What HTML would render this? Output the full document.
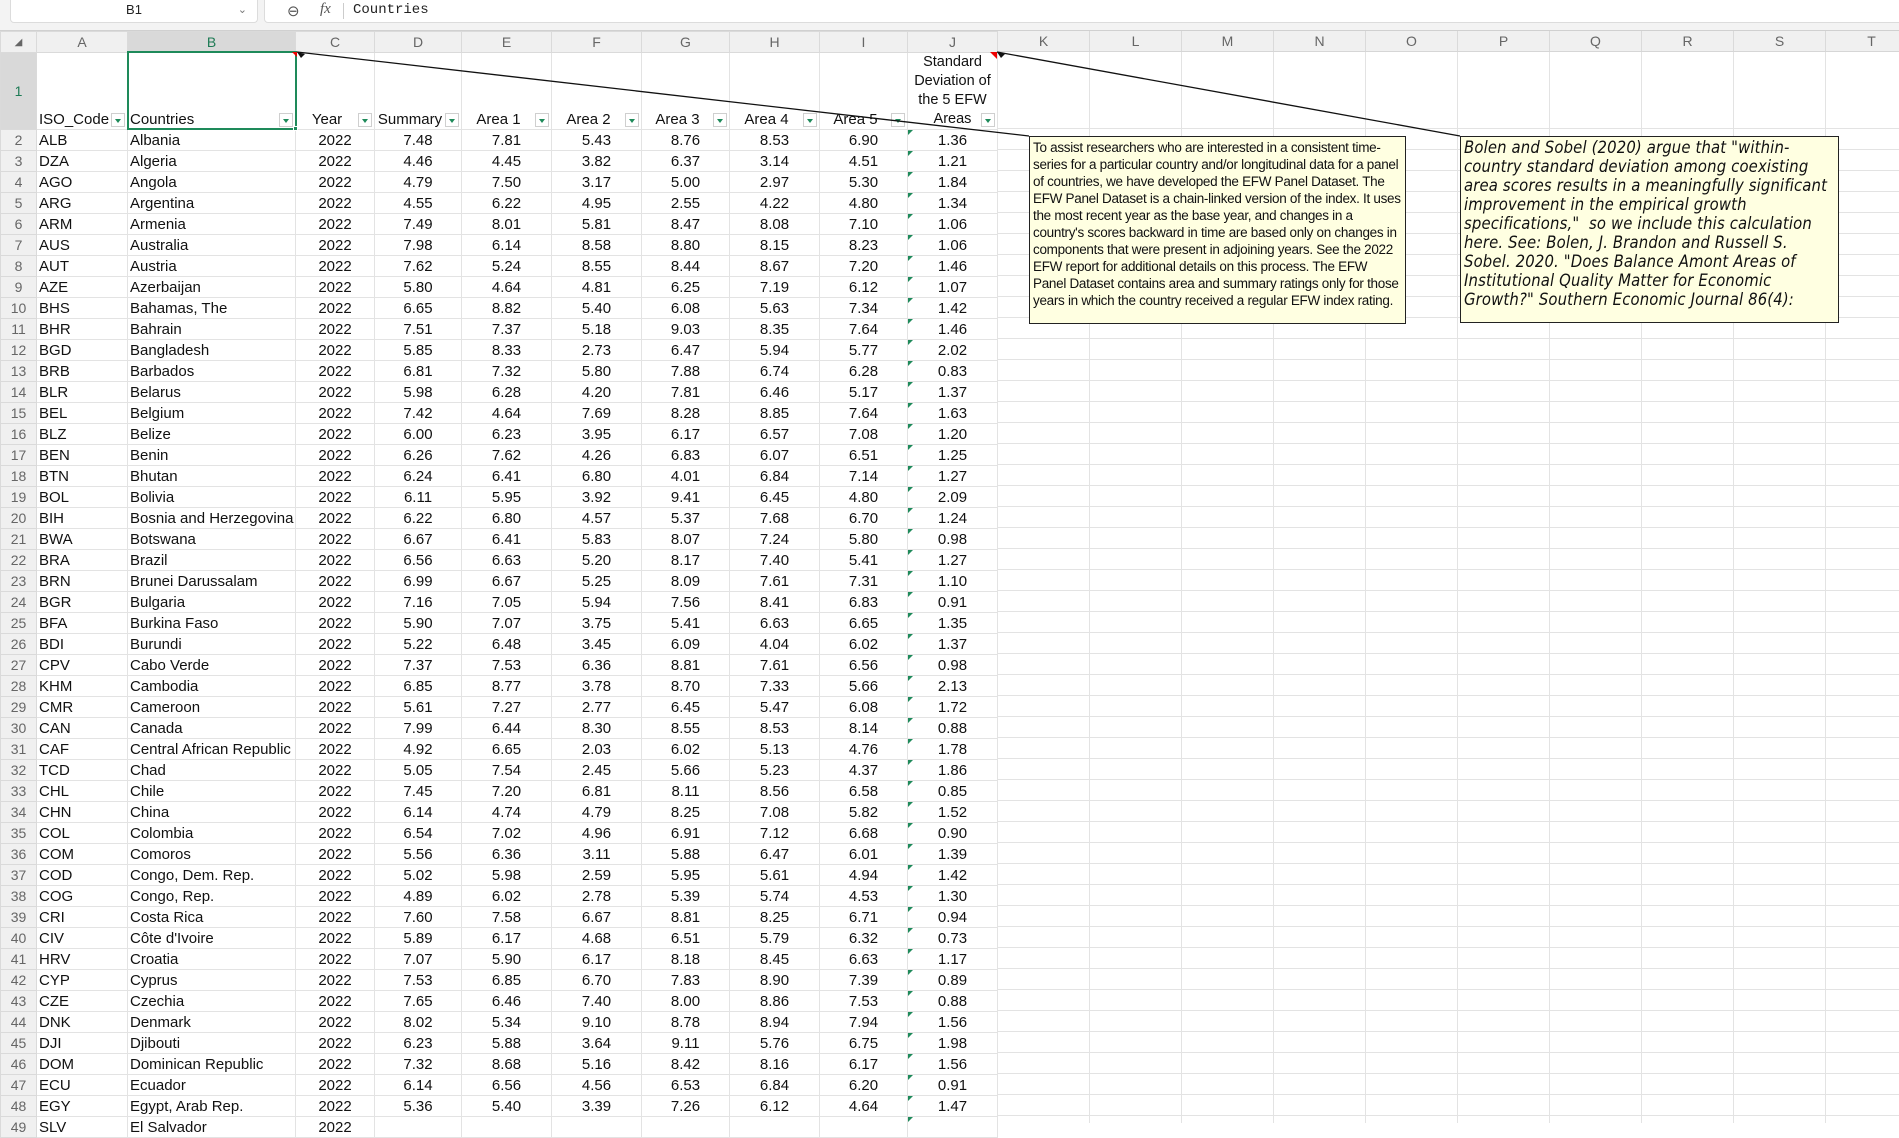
<!DOCTYPE html><html><head><meta charset="utf-8"><style>
*{margin:0;padding:0;box-sizing:border-box}
body{width:1899px;height:1123px;overflow:hidden;background:#fff;font-family:"Liberation Sans",Arial,sans-serif;position:relative}
#fb{position:absolute;left:0;top:0;width:1899px;height:31px;background:#f3f3f3;border-bottom:1px solid #d0d0d0}
#nb{position:absolute;left:10px;top:0;width:248px;height:23px;background:#fff;border:1px solid #dcdcdc;border-top:none;border-radius:0 0 4px 4px;font-size:13px;text-align:center;line-height:20px;color:#222}
#nb span{position:absolute;right:10px;top:0;color:#777;font-size:11px}
#fx{position:absolute;left:264px;top:0;width:1640px;height:23px;background:#fff;border:1px solid #dcdcdc;border-top:none;border-radius:0 0 4px 4px}
#fx .i1{position:absolute;left:22px;top:2px;font-size:15px;color:#555}
#fx .i2{position:absolute;left:55px;top:1px;font-size:15px;font-style:italic;font-family:"Liberation Serif",serif;color:#555}
#fx .d{position:absolute;left:78px;top:3px;width:1px;height:16px;background:#ccc}
#fx .t{position:absolute;left:88px;top:2px;font-family:"Liberation Mono",monospace;font-size:14px;color:#222}
#grid{position:absolute;left:997px;top:52px;width:902px;height:1071px;
background-image:linear-gradient(90deg,#e3e3e3 1px,transparent 1px),linear-gradient(180deg,transparent 76px,#e3e3e3 76px,#e3e3e3 77px,transparent 77px);background-size:92px 100%,100% 100%}
#grid2{position:absolute;left:997px;top:128px;width:902px;height:995px;background-image:linear-gradient(180deg,#e3e3e3 1px,transparent 1px);background-size:100% 21px}
#ch{position:absolute;left:997px;top:31px;width:902px;height:21px;background:#f0f0f0;border-bottom:1px solid #d6d6d6;display:flex}
#ch div{width:92px;flex:none;border-left:1px solid #dadada;text-align:center;font-size:14px;color:#666;line-height:21px}
table{position:absolute;left:0;top:31px;border-collapse:collapse;table-layout:fixed;width:997px}
td,th{border:1px solid #e3e3e3;height:21px;font-size:15px;font-weight:normal;white-space:nowrap;overflow:hidden;padding:0 2px;vertical-align:bottom;line-height:19px;color:#111}
th{background:#f0f0f0;color:#666;text-align:center;font-size:14px;border-color:#dadada}
tr.h th{height:21px;vertical-align:middle}
tr.h th.sel{background:#d9d9d9;color:#1e7b55}
tr.r1 td{height:76px;max-height:76px;position:relative}
tr.r1 th{color:#1e7b55;background:#d9d9d9;vertical-align:middle}
td:nth-child(n+4){text-align:center}
tr.r1 td:nth-child(n+4){padding-right:18px}
tr.r1 td.jh{padding:0;white-space:normal;font-size:14.5px;line-height:19px}
.f{position:absolute;right:2px;bottom:2px;width:14px;height:14px;border:1px solid #cfcfcf;background:#fff}
.f:after{content:"";position:absolute;left:3px;top:5px;border-left:3px solid transparent;border-right:3px solid transparent;border-top:4px solid #1e8a5a}
td.j{position:relative}
td.j:before{content:"";position:absolute;left:0;top:0;border-top:5px solid #1e8a5a;border-right:5px solid transparent}
#selb{position:absolute;left:127px;top:51px;width:170px;height:79px;border:2px solid #1e8a5a}
#selh{position:absolute;left:293px;top:126px;width:5px;height:5px;background:#1e8a5a;border:1px solid #fff}
.cm{position:absolute;background:#ffffe1;border:1px solid #222;color:#111;overflow:hidden}
#c1{left:1029px;top:136px;width:377px;height:188px;font-size:13.5px;line-height:17px;padding:2px 3px;letter-spacing:-.3px}
#c2{left:1460px;top:136px;width:379px;height:187px;font-size:16.5px;line-height:19px;padding:1px 3px;font-style:italic;font-family:"DejaVu Sans Condensed","DejaVu Sans",sans-serif;letter-spacing:.15px}
svg{position:absolute;left:0;top:0}
</style></head><body>
<div id="fb"><div id="nb">B1<span>&#8964;</span></div><div id="fx"><span class="i1">&#8854;</span><span class="i2">fx</span><span class="d"></span><span class="t">Countries</span></div></div>
<div id="ch"><div>K</div><div>L</div><div>M</div><div>N</div><div>O</div><div>P</div><div>Q</div><div>R</div><div>S</div><div>T</div></div>
<div id="grid"></div><div id="grid2"></div>
<table>
<colgroup><col style="width:36px"><col style="width:91px"><col style="width:168px"><col style="width:79px"><col style="width:87px"><col style="width:90px"><col style="width:90px"><col style="width:88px"><col style="width:90px"><col style="width:88px"><col style="width:90px"></colgroup>
<tr class="h"><th style="font-size:10px">&#9698;</th><th>A</th><th class="sel">B</th><th>C</th><th>D</th><th>E</th><th>F</th><th>G</th><th>H</th><th>I</th><th>J</th></tr>
<tr class="r1"><th>1</th><td style="padding-right:18px">ISO_Code<span class="f"></span></td><td>Countries<span class="f"></span></td><td>Year<span class="f"></span></td><td>Summary<span class="f"></span></td><td>Area 1<span class="f"></span></td><td>Area 2<span class="f"></span></td><td>Area 3<span class="f"></span></td><td>Area 4<span class="f"></span></td><td>Area 5<span class="f"></span></td><td class="jh">Standard<br>Deviation of<br>the 5 EFW<br>Areas<span class="f"></span></td></tr>
<tr><th>2</th><td>ALB</td><td>Albania</td><td>2022</td><td>7.48</td><td>7.81</td><td>5.43</td><td>8.76</td><td>8.53</td><td>6.90</td><td class="j">1.36</td></tr>
<tr><th>3</th><td>DZA</td><td>Algeria</td><td>2022</td><td>4.46</td><td>4.45</td><td>3.82</td><td>6.37</td><td>3.14</td><td>4.51</td><td class="j">1.21</td></tr>
<tr><th>4</th><td>AGO</td><td>Angola</td><td>2022</td><td>4.79</td><td>7.50</td><td>3.17</td><td>5.00</td><td>2.97</td><td>5.30</td><td class="j">1.84</td></tr>
<tr><th>5</th><td>ARG</td><td>Argentina</td><td>2022</td><td>4.55</td><td>6.22</td><td>4.95</td><td>2.55</td><td>4.22</td><td>4.80</td><td class="j">1.34</td></tr>
<tr><th>6</th><td>ARM</td><td>Armenia</td><td>2022</td><td>7.49</td><td>8.01</td><td>5.81</td><td>8.47</td><td>8.08</td><td>7.10</td><td class="j">1.06</td></tr>
<tr><th>7</th><td>AUS</td><td>Australia</td><td>2022</td><td>7.98</td><td>6.14</td><td>8.58</td><td>8.80</td><td>8.15</td><td>8.23</td><td class="j">1.06</td></tr>
<tr><th>8</th><td>AUT</td><td>Austria</td><td>2022</td><td>7.62</td><td>5.24</td><td>8.55</td><td>8.44</td><td>8.67</td><td>7.20</td><td class="j">1.46</td></tr>
<tr><th>9</th><td>AZE</td><td>Azerbaijan</td><td>2022</td><td>5.80</td><td>4.64</td><td>4.81</td><td>6.25</td><td>7.19</td><td>6.12</td><td class="j">1.07</td></tr>
<tr><th>10</th><td>BHS</td><td>Bahamas, The</td><td>2022</td><td>6.65</td><td>8.82</td><td>5.40</td><td>6.08</td><td>5.63</td><td>7.34</td><td class="j">1.42</td></tr>
<tr><th>11</th><td>BHR</td><td>Bahrain</td><td>2022</td><td>7.51</td><td>7.37</td><td>5.18</td><td>9.03</td><td>8.35</td><td>7.64</td><td class="j">1.46</td></tr>
<tr><th>12</th><td>BGD</td><td>Bangladesh</td><td>2022</td><td>5.85</td><td>8.33</td><td>2.73</td><td>6.47</td><td>5.94</td><td>5.77</td><td class="j">2.02</td></tr>
<tr><th>13</th><td>BRB</td><td>Barbados</td><td>2022</td><td>6.81</td><td>7.32</td><td>5.80</td><td>7.88</td><td>6.74</td><td>6.28</td><td class="j">0.83</td></tr>
<tr><th>14</th><td>BLR</td><td>Belarus</td><td>2022</td><td>5.98</td><td>6.28</td><td>4.20</td><td>7.81</td><td>6.46</td><td>5.17</td><td class="j">1.37</td></tr>
<tr><th>15</th><td>BEL</td><td>Belgium</td><td>2022</td><td>7.42</td><td>4.64</td><td>7.69</td><td>8.28</td><td>8.85</td><td>7.64</td><td class="j">1.63</td></tr>
<tr><th>16</th><td>BLZ</td><td>Belize</td><td>2022</td><td>6.00</td><td>6.23</td><td>3.95</td><td>6.17</td><td>6.57</td><td>7.08</td><td class="j">1.20</td></tr>
<tr><th>17</th><td>BEN</td><td>Benin</td><td>2022</td><td>6.26</td><td>7.62</td><td>4.26</td><td>6.83</td><td>6.07</td><td>6.51</td><td class="j">1.25</td></tr>
<tr><th>18</th><td>BTN</td><td>Bhutan</td><td>2022</td><td>6.24</td><td>6.41</td><td>6.80</td><td>4.01</td><td>6.84</td><td>7.14</td><td class="j">1.27</td></tr>
<tr><th>19</th><td>BOL</td><td>Bolivia</td><td>2022</td><td>6.11</td><td>5.95</td><td>3.92</td><td>9.41</td><td>6.45</td><td>4.80</td><td class="j">2.09</td></tr>
<tr><th>20</th><td>BIH</td><td>Bosnia and Herzegovina</td><td>2022</td><td>6.22</td><td>6.80</td><td>4.57</td><td>5.37</td><td>7.68</td><td>6.70</td><td class="j">1.24</td></tr>
<tr><th>21</th><td>BWA</td><td>Botswana</td><td>2022</td><td>6.67</td><td>6.41</td><td>5.83</td><td>8.07</td><td>7.24</td><td>5.80</td><td class="j">0.98</td></tr>
<tr><th>22</th><td>BRA</td><td>Brazil</td><td>2022</td><td>6.56</td><td>6.63</td><td>5.20</td><td>8.17</td><td>7.40</td><td>5.41</td><td class="j">1.27</td></tr>
<tr><th>23</th><td>BRN</td><td>Brunei Darussalam</td><td>2022</td><td>6.99</td><td>6.67</td><td>5.25</td><td>8.09</td><td>7.61</td><td>7.31</td><td class="j">1.10</td></tr>
<tr><th>24</th><td>BGR</td><td>Bulgaria</td><td>2022</td><td>7.16</td><td>7.05</td><td>5.94</td><td>7.56</td><td>8.41</td><td>6.83</td><td class="j">0.91</td></tr>
<tr><th>25</th><td>BFA</td><td>Burkina Faso</td><td>2022</td><td>5.90</td><td>7.07</td><td>3.75</td><td>5.41</td><td>6.63</td><td>6.65</td><td class="j">1.35</td></tr>
<tr><th>26</th><td>BDI</td><td>Burundi</td><td>2022</td><td>5.22</td><td>6.48</td><td>3.45</td><td>6.09</td><td>4.04</td><td>6.02</td><td class="j">1.37</td></tr>
<tr><th>27</th><td>CPV</td><td>Cabo Verde</td><td>2022</td><td>7.37</td><td>7.53</td><td>6.36</td><td>8.81</td><td>7.61</td><td>6.56</td><td class="j">0.98</td></tr>
<tr><th>28</th><td>KHM</td><td>Cambodia</td><td>2022</td><td>6.85</td><td>8.77</td><td>3.78</td><td>8.70</td><td>7.33</td><td>5.66</td><td class="j">2.13</td></tr>
<tr><th>29</th><td>CMR</td><td>Cameroon</td><td>2022</td><td>5.61</td><td>7.27</td><td>2.77</td><td>6.45</td><td>5.47</td><td>6.08</td><td class="j">1.72</td></tr>
<tr><th>30</th><td>CAN</td><td>Canada</td><td>2022</td><td>7.99</td><td>6.44</td><td>8.30</td><td>8.55</td><td>8.53</td><td>8.14</td><td class="j">0.88</td></tr>
<tr><th>31</th><td>CAF</td><td>Central African Republic</td><td>2022</td><td>4.92</td><td>6.65</td><td>2.03</td><td>6.02</td><td>5.13</td><td>4.76</td><td class="j">1.78</td></tr>
<tr><th>32</th><td>TCD</td><td>Chad</td><td>2022</td><td>5.05</td><td>7.54</td><td>2.45</td><td>5.66</td><td>5.23</td><td>4.37</td><td class="j">1.86</td></tr>
<tr><th>33</th><td>CHL</td><td>Chile</td><td>2022</td><td>7.45</td><td>7.20</td><td>6.81</td><td>8.11</td><td>8.56</td><td>6.58</td><td class="j">0.85</td></tr>
<tr><th>34</th><td>CHN</td><td>China</td><td>2022</td><td>6.14</td><td>4.74</td><td>4.79</td><td>8.25</td><td>7.08</td><td>5.82</td><td class="j">1.52</td></tr>
<tr><th>35</th><td>COL</td><td>Colombia</td><td>2022</td><td>6.54</td><td>7.02</td><td>4.96</td><td>6.91</td><td>7.12</td><td>6.68</td><td class="j">0.90</td></tr>
<tr><th>36</th><td>COM</td><td>Comoros</td><td>2022</td><td>5.56</td><td>6.36</td><td>3.11</td><td>5.88</td><td>6.47</td><td>6.01</td><td class="j">1.39</td></tr>
<tr><th>37</th><td>COD</td><td>Congo, Dem. Rep.</td><td>2022</td><td>5.02</td><td>5.98</td><td>2.59</td><td>5.95</td><td>5.61</td><td>4.94</td><td class="j">1.42</td></tr>
<tr><th>38</th><td>COG</td><td>Congo, Rep.</td><td>2022</td><td>4.89</td><td>6.02</td><td>2.78</td><td>5.39</td><td>5.74</td><td>4.53</td><td class="j">1.30</td></tr>
<tr><th>39</th><td>CRI</td><td>Costa Rica</td><td>2022</td><td>7.60</td><td>7.58</td><td>6.67</td><td>8.81</td><td>8.25</td><td>6.71</td><td class="j">0.94</td></tr>
<tr><th>40</th><td>CIV</td><td>Côte d'Ivoire</td><td>2022</td><td>5.89</td><td>6.17</td><td>4.68</td><td>6.51</td><td>5.79</td><td>6.32</td><td class="j">0.73</td></tr>
<tr><th>41</th><td>HRV</td><td>Croatia</td><td>2022</td><td>7.07</td><td>5.90</td><td>6.17</td><td>8.18</td><td>8.45</td><td>6.63</td><td class="j">1.17</td></tr>
<tr><th>42</th><td>CYP</td><td>Cyprus</td><td>2022</td><td>7.53</td><td>6.85</td><td>6.70</td><td>7.83</td><td>8.90</td><td>7.39</td><td class="j">0.89</td></tr>
<tr><th>43</th><td>CZE</td><td>Czechia</td><td>2022</td><td>7.65</td><td>6.46</td><td>7.40</td><td>8.00</td><td>8.86</td><td>7.53</td><td class="j">0.88</td></tr>
<tr><th>44</th><td>DNK</td><td>Denmark</td><td>2022</td><td>8.02</td><td>5.34</td><td>9.10</td><td>8.78</td><td>8.94</td><td>7.94</td><td class="j">1.56</td></tr>
<tr><th>45</th><td>DJI</td><td>Djibouti</td><td>2022</td><td>6.23</td><td>5.88</td><td>3.64</td><td>9.11</td><td>5.76</td><td>6.75</td><td class="j">1.98</td></tr>
<tr><th>46</th><td>DOM</td><td>Dominican Republic</td><td>2022</td><td>7.32</td><td>8.68</td><td>5.16</td><td>8.42</td><td>8.16</td><td>6.17</td><td class="j">1.56</td></tr>
<tr><th>47</th><td>ECU</td><td>Ecuador</td><td>2022</td><td>6.14</td><td>6.56</td><td>4.56</td><td>6.53</td><td>6.84</td><td>6.20</td><td class="j">0.91</td></tr>
<tr><th>48</th><td>EGY</td><td>Egypt, Arab Rep.</td><td>2022</td><td>5.36</td><td>5.40</td><td>3.39</td><td>7.26</td><td>6.12</td><td>4.64</td><td class="j">1.47</td></tr>
<tr><th>49</th><td>SLV</td><td>El Salvador</td><td>2022</td><td></td><td></td><td></td><td></td><td></td><td></td><td class="j"></td></tr>
</table>
<div id="selb"></div><div id="selh"></div>
<svg width="1899" height="1123">
<line x1="297" y1="52" x2="1029" y2="136" stroke="#111" stroke-width="1.3"/>
<line x1="997" y1="52" x2="1460" y2="136" stroke="#111" stroke-width="1.3"/>
<polygon points="292,52 297,52 297,57" fill="#e00"/>
<polygon points="990,52 997,52 997,59" fill="#e00"/>
<polygon points="297,52 305,54 301,58" fill="#111"/>
<polygon points="997,52 1005,54 1001,58" fill="#111"/>
</svg>
<div class="cm" id="c1">To assist researchers who are interested in a consistent time-series for a particular country and/or longitudinal data for a panel of countries, we have developed the EFW Panel Dataset. The EFW Panel Dataset is a chain-linked version of the index. It uses the most recent year as the base year, and changes in a country's scores backward in time are based only on changes in components that were present in adjoining years. See the 2022 EFW report for additional details on this process. The EFW Panel Dataset contains area and summary ratings only for those years in which the country received a regular EFW index rating.</div>
<div class="cm" id="c2">Bolen and Sobel (2020) argue that "within-country standard deviation among coexisting area scores results in a meaningfully significant improvement in the empirical growth specifications,"&nbsp; so we include this calculation here. See: Bolen, J. Brandon and Russell S. Sobel. 2020. "Does Balance Amont Areas of Institutional Quality Matter for Economic Growth?" Southern Economic Journal 86(4):</div>
</body></html>
